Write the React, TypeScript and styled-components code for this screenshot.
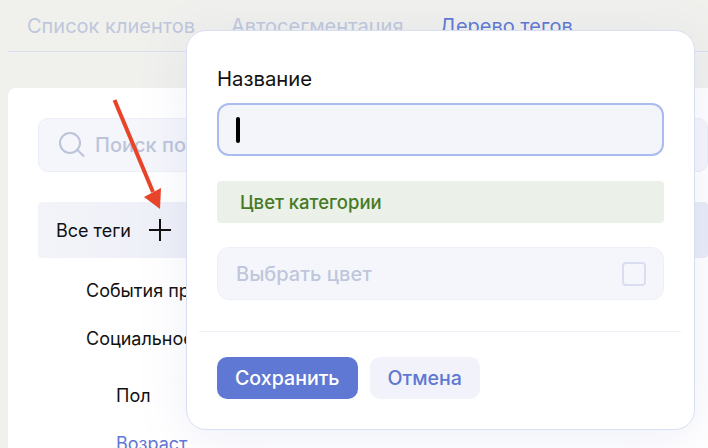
import React from "react";
import styled, { createGlobalStyle } from "styled-components";

const Global = createGlobalStyle`
  html, body { margin: 0; padding: 0; width: 708px; height: 448px; overflow: hidden; background: #f0f1ed; }
  body { font-family: Inter, "Liberation Sans", sans-serif; }
`;
const Page = styled.div`
  position: relative; width: 708px; height: 448px; overflow: hidden; padding-left: 8px; box-sizing: border-box;
`;
const Tabs = styled.div`
  display: flex; gap: 36px; height: 52px; padding-left: 19px; padding-top: 14px; box-sizing: border-box;
  border-bottom: 1.5px solid #d9dff0; margin-bottom: 36px;
`;
const Tab = styled.div<{ $active?: boolean }>`
  font-size: 20px; line-height: 24px; white-space: nowrap; color: ${p => (p.$active ? "#5f78d3" : "#bfc7dc")};
`;
const Card = styled.div`
  background: #fff; border-radius: 8px 0 0 0; padding: 30px 0 0 30px; height: 360px; box-sizing: border-box;
`;
const Search = styled.div`
  display: flex; align-items: center; gap: 8px; height: 54px; padding-left: 20px; box-sizing: border-box;
  background: #f5f6fb; border: 1.5px solid #eceef7; border-radius: 10px; margin-bottom: 30px;
  color: #bcc4da; font-size: 20px; font-weight: 500; white-space: nowrap;
`;
const RootRow = styled.div`
  display: flex; align-items: center; gap: 17px; height: 56px; padding-left: 18px; box-sizing: border-box;
  background: linear-gradient(90deg, #f3f4f9, #e9ecf7 40%); border-radius: 4px; font-size: 18px; color: #111; margin-bottom: 17px;
`;
const Item = styled.div<{ $level: number; $link?: boolean }>`
  font-size: 18px; line-height: 32px; height: 32px; white-space: nowrap;
  padding-left: ${p => p.$level * 30 + 18}px; color: ${p => (p.$link ? "#5f78d3" : "#111")};
  margin-bottom: 16px;
`;
const Nested = styled.div`
  margin-top: 25px;
`;
const Modal = styled.div`
  position: absolute; left: 186px; top: 30px; width: 509px; height: 400px; box-sizing: border-box;
  background: #fff; border: 1.5px solid #d9dff0; border-radius: 20px; padding: 36px 30px 0;
  box-shadow: 0 8px 50px rgba(120, 135, 200, 0.13);
`;
const Label = styled.div`
  font-size: 20.3px; line-height: 24px; color: #111; margin-bottom: 12px;
`;
const NameInput = styled.div`
  display: flex; align-items: center; height: 53px; box-sizing: border-box; padding-left: 17px;
  background: #f4f5fa; border: 2px solid #a9bbef; border-radius: 12px; margin-bottom: 25px;
`;
const Caret = styled.span`
  width: 4px; height: 26px; background: #000; border-radius: 2px;
`;
const Notice = styled.div`
  display: flex; align-items: center; height: 42px; box-sizing: border-box; padding-left: 23px;
  background: #ebf0e8; border-radius: 4px; color: #467a25; font-size: 18.5px; font-weight: 500; margin-bottom: 24px;
`;
const ColorPicker = styled.div`
  display: flex; align-items: center; justify-content: space-between; height: 53px; box-sizing: border-box;
  padding: 0 17px 0 18px; background: #f5f6fb; border: 1.5px solid #eef0f7; border-radius: 12px;
  color: #bfc7dc; font-size: 20px; font-weight: 500; margin-bottom: 31px;
`;
const Swatch = styled.span`
  width: 24px; height: 24px; box-sizing: border-box; border: 2px solid #d9dff0; border-radius: 4px;
`;
const Divider = styled.div`
  height: 1px; background: #eff0f7; margin: 0 -17px 25px -18px;
`;
const Buttons = styled.div`
  display: flex; gap: 12px;
`;
const Button = styled.div<{ $primary?: boolean }>`
  display: flex; align-items: center; justify-content: center; height: 42px; border-radius: 10px;
  padding: 0 18px; font-size: 19.6px; font-weight: 500;
  background: ${p => (p.$primary ? "#5f78d3" : "#f2f3fa")}; color: ${p => (p.$primary ? "#fff" : "#5f78d3")};
`;
const Arrow = styled.svg`
  position: absolute; left: 105px; top: 95px;
`;

export default function App() {
  return (
    <Page>
      <Global />
      <Tabs>
        <Tab>Список клиентов</Tab>
        <Tab>Автосегментация</Tab>
        <Tab $active>Дерево тегов</Tab>
      </Tabs>
      <Card>
        <Search>
          <svg width="28" height="28" viewBox="0 0 28 28" fill="none" stroke="#bcc4da" strokeWidth="2">
            <circle cx="11" cy="12" r="10" />
            <path d="M18.5 19l6.5 6.5" />
          </svg>
          Поиск по тегам
        </Search>
        <RootRow>
          Все теги
          <svg width="24" height="24" viewBox="0 0 24 24" stroke="#111" strokeWidth="2" fill="none">
            <path d="M1 12h22M12 1v22" />
          </svg>
        </RootRow>
        <Item $level={1}>События продаж</Item>
        <Item $level={1}>Социальное</Item>
        <Nested>
          <Item $level={2}>Пол</Item>
          <Item $level={2} $link>Возраст</Item>
        </Nested>
      </Card>
      <Arrow width="60" height="125" viewBox="0 0 60 125">
        <path d="M9.5 5L48 97" stroke="#e8442a" strokeWidth="4" fill="none" />
        <path d="M39 102L56 93 55 114Z" fill="#e8442a" />
      </Arrow>
      <Modal>
        <Label>Название</Label>
        <NameInput><Caret /></NameInput>
        <Notice>Цвет категории</Notice>
        <ColorPicker>Выбрать цвет<Swatch /></ColorPicker>
        <Divider />
        <Buttons>
          <Button $primary>Сохранить</Button>
          <Button>Отмена</Button>
        </Buttons>
      </Modal>
    </Page>
  );
}
